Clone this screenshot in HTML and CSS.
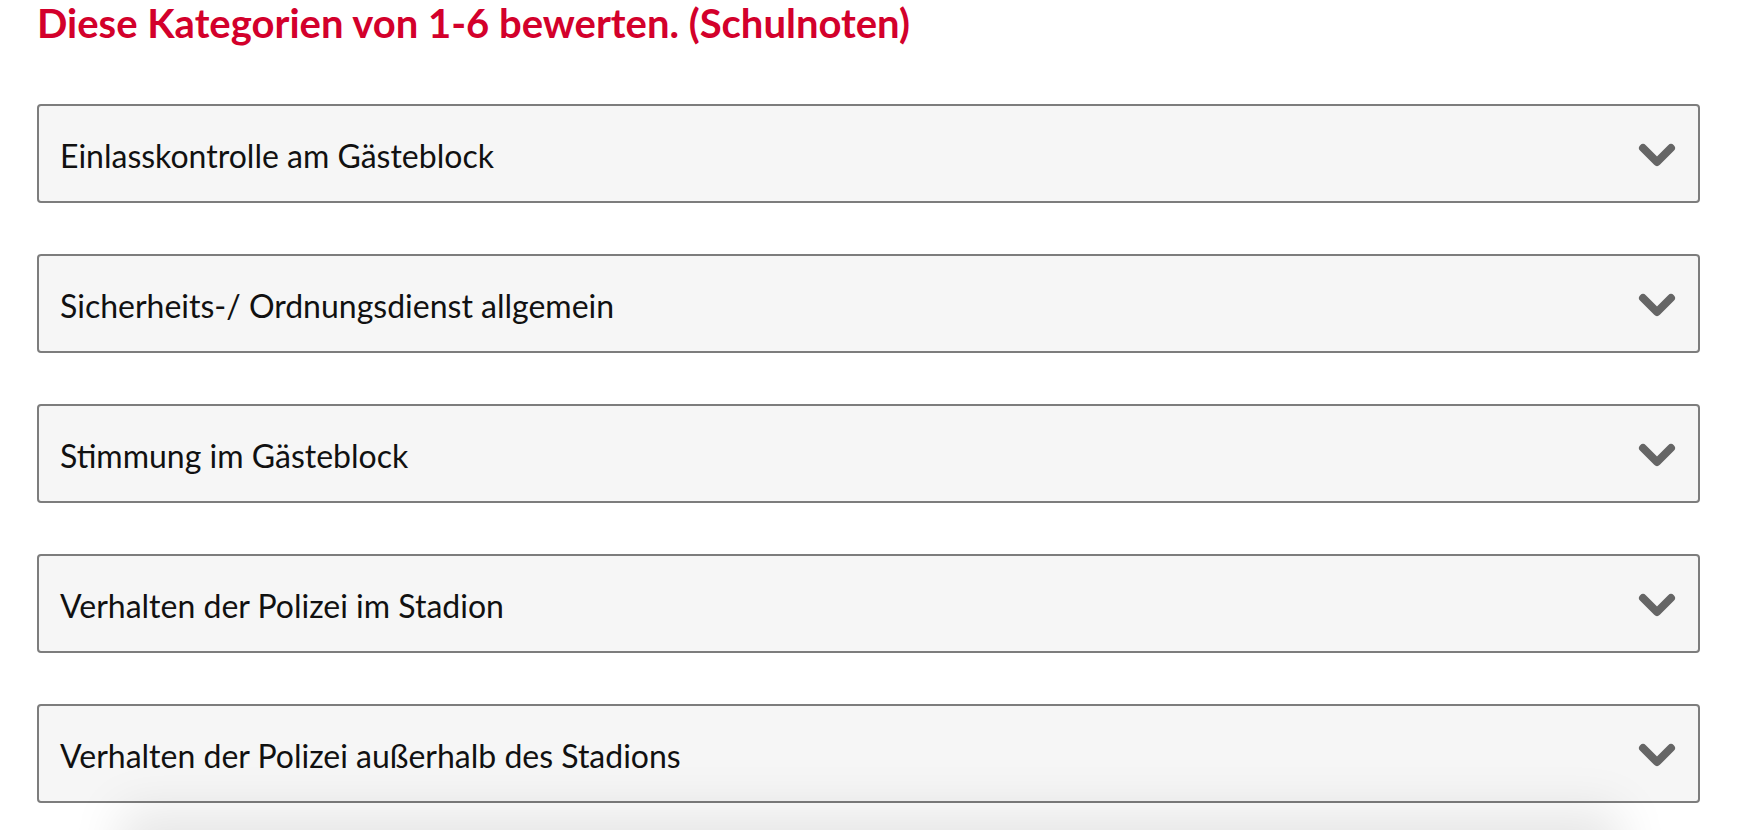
FILE: index.html
```html
<!DOCTYPE html>
<html lang="de">
<head>
<meta charset="utf-8">
<title>Kategorien bewerten</title>
<link rel="stylesheet" href="styles.css">
</head>
<body>
<main class="page">
  <h2 class="title">Diese Kategorien von 1-6 bewerten. (Schulnoten)</h2>
  <div class="list">
    <div class="item"><span class="label">Einlasskontrolle am Gästeblock</span><svg class="chev" viewBox="0 0 40 28" width="40" height="28"><polyline points="6,6 20,20 34,6"/></svg></div>
    <div class="item"><span class="label">Sicherheits-/ Ordnungsdienst allgemein</span><svg class="chev" viewBox="0 0 40 28" width="40" height="28"><polyline points="6,6 20,20 34,6"/></svg></div>
    <div class="item"><span class="label">Stimmung im Gästeblock</span><svg class="chev" viewBox="0 0 40 28" width="40" height="28"><polyline points="6,6 20,20 34,6"/></svg></div>
    <div class="item"><span class="label">Verhalten der Polizei im Stadion</span><svg class="chev" viewBox="0 0 40 28" width="40" height="28"><polyline points="6,6 20,20 34,6"/></svg></div>
    <div class="item"><span class="label">Verhalten der Polizei außerhalb des Stadions</span><svg class="chev" viewBox="0 0 40 28" width="40" height="28"><polyline points="6,6 20,20 34,6"/></svg></div>
  </div>
</main>
<div class="bottom-shade"></div>
</body>
</html>
```

FILE: styles.css
```css
html, body {
  margin: 0;
  padding: 0;
  background: #ffffff;
}
body {
  font-family: Lato, "Open Sans", sans-serif;
  overflow: hidden;
}
.page {
  padding: 0 40px 0 37px;
  width: 1663px;
}
.title {
  margin: 0;
  font-size: 40px;
  line-height: 46px;
  font-weight: 700;
  color: #d3002b;
}
.list {
  display: flex;
  flex-direction: column;
  gap: 51px;
  margin-top: 58px;
}
.item {
  box-sizing: border-box;
  height: 99px;
  display: flex;
  align-items: center;
  justify-content: space-between;
  padding: 4px 21px 0 21px;
  background: #f6f6f6;
  border: 2px solid #7d7d7d;
  border-radius: 4px;
}
.label {
  font-size: 32px;
  color: #111111;
}
.chev {
  display: block;
}
.chev polyline {
  fill: none;
  stroke: #666666;
  stroke-width: 8;
  stroke-linecap: round;
  stroke-linejoin: round;
}
.bottom-shade {
  position: fixed;
  left: 140px;
  right: 140px;
  bottom: -40px;
  height: 40px;
  box-shadow: 0 0 50px 20px rgba(0, 0, 0, 0.10);
  pointer-events: none;
}
```
